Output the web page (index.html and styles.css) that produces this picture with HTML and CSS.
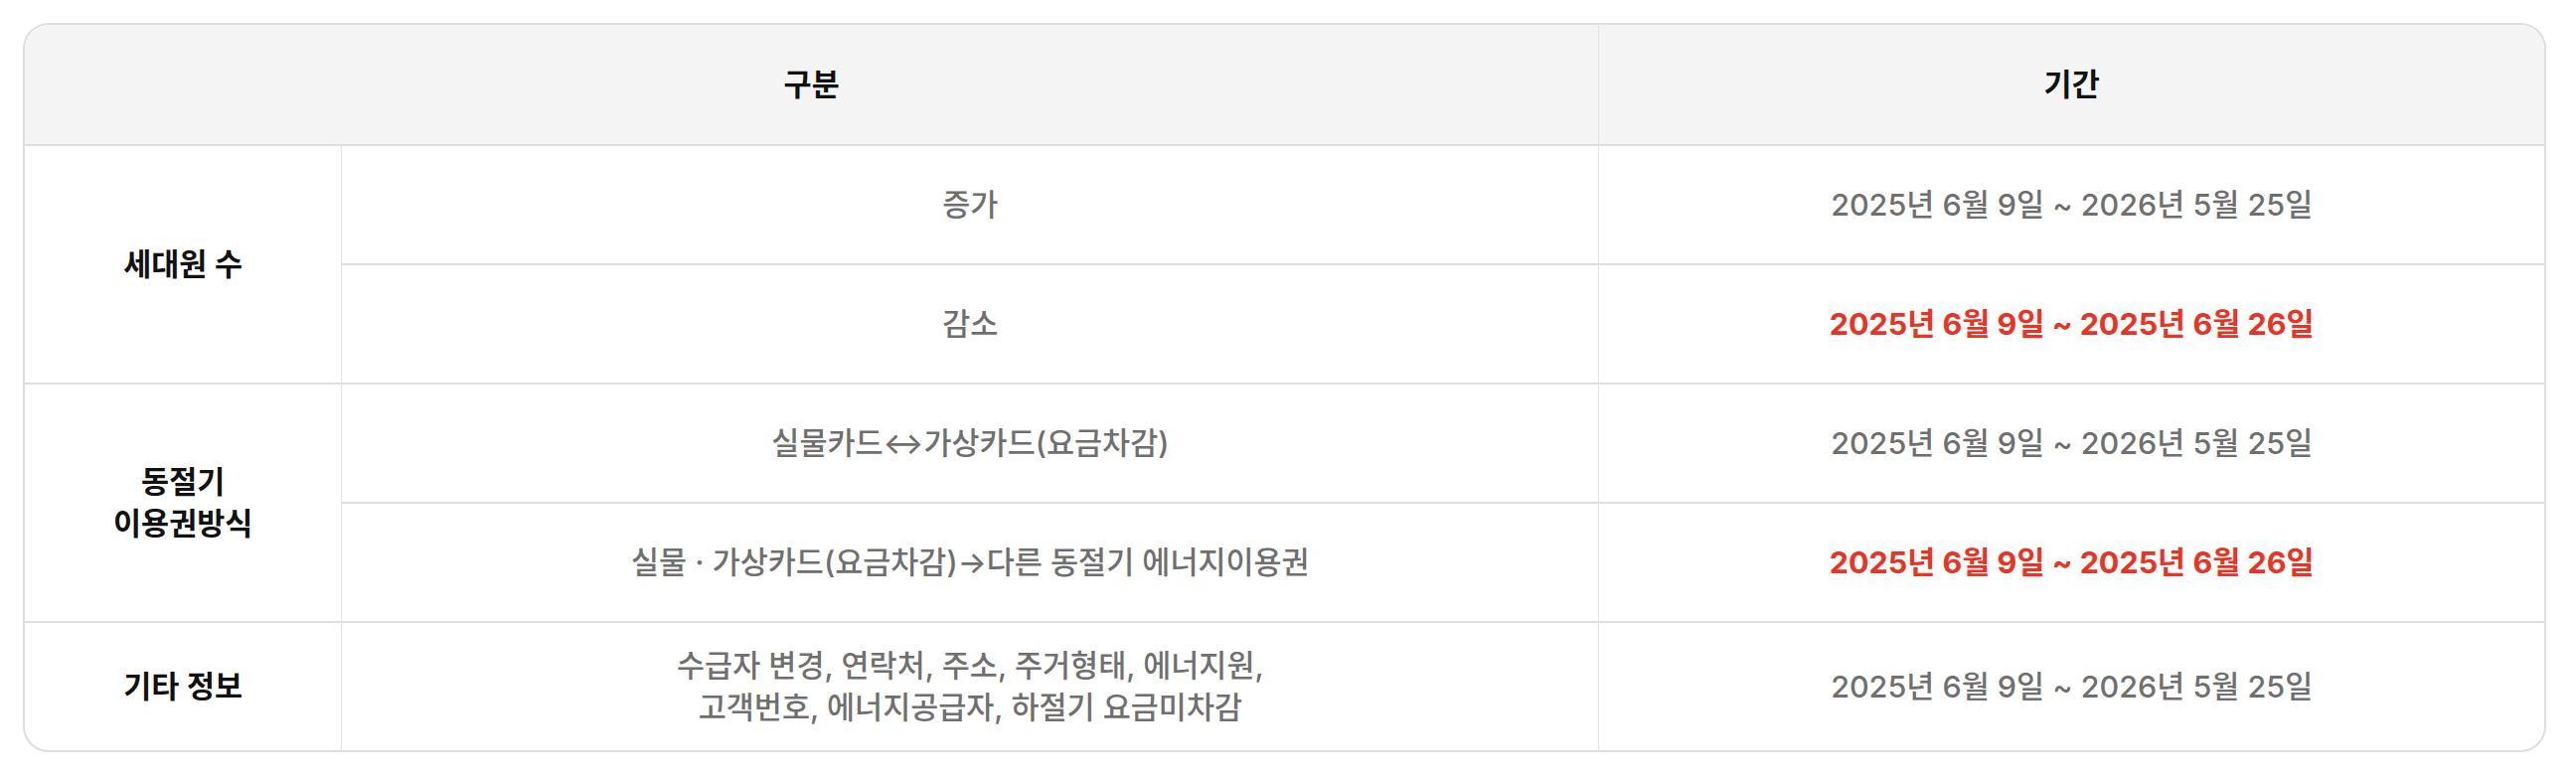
FILE: index.html
```html
<!DOCTYPE html>
<html lang="ko">
<head>
<meta charset="utf-8">
<title>변경 신청 기간</title>
<link rel="stylesheet" href="styles.css">
</head>
<body>
<div class="page">
  <div class="table-wrap">
    <table class="period-table">
      <colgroup>
        <col class="col-a">
        <col class="col-b">
        <col class="col-c">
      </colgroup>
      <thead>
        <tr>
          <th colspan="2">구분</th>
          <th class="last">기간</th>
        </tr>
      </thead>
      <tbody>
        <tr>
          <th rowspan="2" class="group">세대원 수</th>
          <td>증가</td>
          <td class="last">2025년 6월 9일 ~ 2026년 5월 25일</td>
        </tr>
        <tr>
          <td>감소</td>
          <td class="last red">2025년 6월 9일 ~ 2025년 6월 26일</td>
        </tr>
        <tr>
          <th rowspan="2" class="group">동절기<br>이용권방식</th>
          <td>실물카드↔가상카드(요금차감)</td>
          <td class="last">2025년 6월 9일 ~ 2026년 5월 25일</td>
        </tr>
        <tr>
          <td>실물 · 가상카드(요금차감)→다른 동절기 에너지이용권</td>
          <td class="last red">2025년 6월 9일 ~ 2025년 6월 26일</td>
        </tr>
        <tr class="end">
          <th class="group">기타 정보</th>
          <td>수급자 변경, 연락처, 주소, 주거형태, 에너지원,<br>고객번호, 에너지공급자, 하절기 요금미차감</td>
          <td class="last">2025년 6월 9일 ~ 2026년 5월 25일</td>
        </tr>
      </tbody>
    </table>
  </div>
</div>
</body>
</html>
```

FILE: styles.css
```css
html, body {
  margin: 0;
  padding: 0;
  background: #ffffff;
}

.page {
  padding: 23px 30px 0 23px;
  font-family: Inter, "Noto Sans CJK KR", sans-serif;
}

.table-wrap {
  border: 2px solid #dedede;
  border-radius: 26px;
  overflow: hidden;
}

.period-table {
  width: 100%;
  table-layout: fixed;
  border-collapse: separate;
  border-spacing: 0;
  font-size: 30.5px;
  line-height: 42px;
  text-align: center;
}

.col-a { width: 12.6%; }
.col-b { width: 49.9%; }
.col-c { width: 37.5%; }

.period-table th,
.period-table td {
  padding: 0 20px;
  border-bottom: 2px solid #dedede;
  border-right: 1px solid #e2e2e2;
  vertical-align: middle;
}

.period-table thead th {
  height: 120px;
  background: #f4f4f4;
  color: #111111;
  font-weight: 700;
}

.period-table tbody tr {
  height: 120px;
}

.period-table .group {
  color: #111111;
  font-weight: 600;
}

.period-table td {
  color: #6f6f6f;
  font-weight: 500;
}

.period-table td.red {
  color: #ea3323;
  font-weight: 700;
}

.period-table .last {
  border-right: none;
}

.period-table tr.end th,
.period-table tr.end td {
  height: 128px;
  border-bottom: none;
}
```
